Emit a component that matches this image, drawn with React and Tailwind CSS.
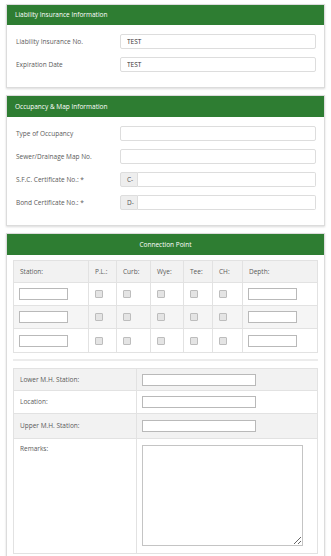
import React from 'react';

const font = { fontFamily: '"Open Sans", "Liberation Sans", sans-serif' };

const Panel = ({ title, center, headerH, children }) => (
    <div className="mx-[6px] border border-[#dcdcdc] bg-white shadow-[0_1px_2px_rgba(0,0,0,0.15)]">
        <div className={`${headerH} bg-[#2e7d32] text-white text-[6.5px] flex items-center px-[8px] ${center ? 'justify-center' : ''}`}>
            {title}
        </div>
        {children}
    </div>
);

const FieldRow = ({ label, value, addon }) => (
    <div className="flex items-center h-[15px]">
        <label className="w-[104px] text-[6.5px] text-[#5a5a5a]">{label}</label>
        <div className="flex-1 flex h-[15px]">
            {addon && (
                <span className="w-[18px] flex items-center pl-[6px] bg-[#eee] border border-[#ddd] rounded-l-[2px] text-[6.5px] text-[#555]">{addon}</span>
            )}
            <input
                readOnly
                value={value || ''}
                className={`flex-1 min-w-0 h-[15px] border border-[#ddd] px-[6px] text-[6.5px] text-[#333] outline-none ${addon ? 'border-l-0 rounded-r-[2px]' : 'rounded-[2px]'}`}
            />
        </div>
    </div>
);

const Check = () => (
    <input type="checkbox" className="appearance-none block w-[8px] h-[8px] border border-[#bdbdbd] bg-[#e4e4e4] rounded-[1px]" />
);

const TInput = ({ w = 'w-[49px]' }) => (
    <input className={`${w} h-[12px] border border-[#b9b9b9] bg-white block outline-none`} />
);

export default function App() {
    const cols = ['Station:', 'P.L.:', 'Curb:', 'Wye:', 'Tee:', 'CH:', 'Depth:'];
    const widths = ['w-[75px]', 'w-[28px]', 'w-[34px]', 'w-[33px]', 'w-[29px]', 'w-[30px]', ''];
    const rows = [
        { bg: 'bg-white', h: 'h-[23px]' },
        { bg: 'bg-[#f5f5f5]', h: 'h-[23px]' },
        { bg: 'bg-white', h: 'h-[24px]' },
    ];
    const td = 'border border-[#e2e2e2] px-[5px] align-middle';

    return (
        <div className="bg-white w-[331px] min-h-[556px] pt-[4px] text-[#5a5a5a]" style={font}>
            {/* Liability */}
            <Panel title="Liability Insurance Information" headerH="h-[20px]">
                <div className="pl-[9px] pr-[8px] pt-[9px] pb-[15px] flex flex-col gap-[8px]">
                    <FieldRow label="Liability Insurance No." value="TEST" />
                    <FieldRow label="Expiration Date" value="TEST" />
                </div>
            </Panel>

            <div className="h-[7px]" />

            {/* Occupancy */}
            <Panel title="Occupancy & Map Information" headerH="h-[21px]">
                <div className="pl-[9px] pr-[8px] pt-[9px] pb-[15px] flex flex-col gap-[8px]">
                    <FieldRow label="Type of Occupancy" />
                    <FieldRow label="Sewer/Drainage Map No." />
                    <FieldRow label="S.F.C. Certificate No.: *" addon="C-" />
                    <FieldRow label="Bond Certificate No.: *" addon="D-" />
                </div>
            </Panel>

            <div className="h-[7px]" />

            {/* Connection point */}
            <Panel title="Connection Point" center headerH="h-[21px]">
                <div className="px-[6px] pt-[5px] pb-[8px]">
                    <table className="w-full border-collapse table-fixed text-[6.5px] text-[#5a5a5a]">
                        <colgroup>
                            {widths.map((w, i) => <col key={i} className={w} />)}
                        </colgroup>
                        <thead>
                            <tr className="h-[22px] bg-[#f2f2f2]">
                                {cols.map((c) => (
                                    <th key={c} className={`${td} font-normal text-left pl-[6px]`}>{c}</th>
                                ))}
                            </tr>
                        </thead>
                        <tbody>
                            {rows.map((row, r) => (
                                <tr key={r} className={`${row.h} ${row.bg}`}>
                                    <td className={td}><TInput /></td>
                                    {[0, 1, 2, 3, 4].map((k) => (
                                        <td key={k} className={`${td} pl-[6px]`}><Check /></td>
                                    ))}
                                    <td className={td}><TInput /></td>
                                </tr>
                            ))}
                        </tbody>
                    </table>

                    <hr className="mt-[6px] mb-[7px] border-0 border-t-[2px] border-[#ececec]" />

                    <table className="w-full border-collapse table-fixed text-[6.5px] text-[#5a5a5a]">
                        <colgroup>
                            <col className="w-[123px]" />
                            <col />
                        </colgroup>
                        <tbody>
                            <tr className="h-[22px] bg-[#f2f2f2]">
                                <td className="border border-[#e2e2e2] px-[6px]">Lower M.H. Station:</td>
                                <td className="border border-[#e2e2e2] px-[5px]"><TInput w="w-[114px]" /></td>
                            </tr>
                            <tr className="h-[23px] bg-white">
                                <td className="border border-[#e2e2e2] px-[6px]">Location:</td>
                                <td className="border border-[#e2e2e2] px-[5px]"><TInput w="w-[114px]" /></td>
                            </tr>
                            <tr className="h-[25px] bg-[#f2f2f2]">
                                <td className="border border-[#e2e2e2] px-[6px]">Upper M.H. Station:</td>
                                <td className="border border-[#e2e2e2] px-[5px]"><TInput w="w-[114px]" /></td>
                            </tr>
                            <tr className="h-[115px] bg-white">
                                <td className="border border-[#e2e2e2] px-[6px] pt-[5px] align-top">Remarks:</td>
                                <td className="border border-[#e2e2e2] px-[5px] pt-[6px] pb-[6px] align-top">
                                    <textarea className="block w-[161px] h-[101px] border border-[#c4c4c4] bg-white outline-none" />
                                </td>
                            </tr>
                        </tbody>
                    </table>
                </div>
            </Panel>
        </div>
    );
}
